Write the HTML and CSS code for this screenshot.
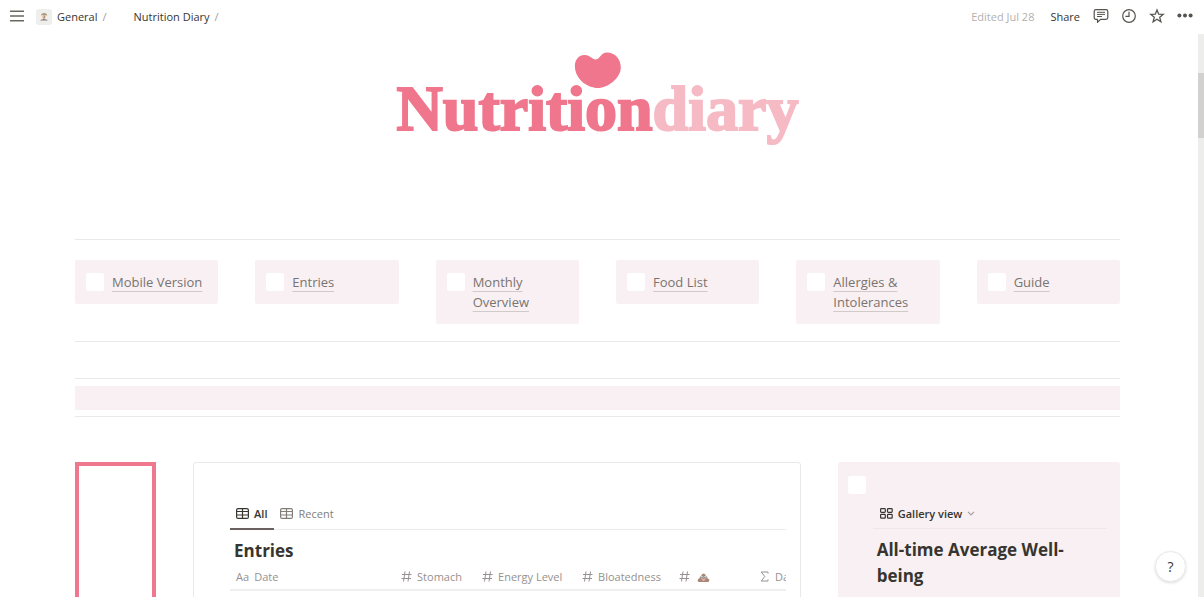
FILE: index.html
```html
<!DOCTYPE html>
<html lang="en">
<head>
<meta charset="utf-8">
<title>Nutrition Diary</title>
<link rel="stylesheet" href="styles.css">
</head>
<body>
<div class="app">
  <header class="topbar">
    <button class="icon-btn" aria-label="Menu">
      <svg width="14" height="14" viewBox="0 0 14 14" fill="none" stroke="#6b6862" stroke-width="1.5"><path d="M0 2.2h14M0 7h14M0 11.800h14"/></svg>
    </button>
    <nav class="crumbs" aria-label="Breadcrumb">
      <a class="crumb" href="#general">
        <span class="crumb-icon"><svg width="10" height="10" viewBox="0 0 10 10"><path d="M2 3.500Q2.200 1 5.200 1Q8 1 8.300 3.800L6.800 3 5.500 3.600 3.800 2.900Z" fill="#a99a82"/><path d="M3.400 3.300h3.200v2.500L5 7 3.400 5.800Z" fill="#e5bb96"/><path d="M5.700 3.500L4.800 7" stroke="#b5815c" stroke-width=".9"/><path d="M1 8.600Q2 7 5 7T9 8.600Z" fill="#867b70"/></svg></span>
        General</a>
      <span class="slash">/</span>
      <a class="crumb crumb-last" href="#diary">Nutrition Diary</a>
      <span class="slash">/</span>
    </nav>
    <div class="actions">
      <span class="edited">Edited Jul 28</span>
      <button class="share">Share</button>
      <button class="icon-btn" aria-label="Comments">
        <svg width="16" height="16" viewBox="0 0 16 16" fill="none" stroke="#55534e" stroke-width="1.2" stroke-linejoin="round"><path d="M3 1.600h10Q14.800 1.600 14.800 3.400v6.200Q14.800 11.400 13 11.400H7.600L4.500 14.300V11.400H3Q1.200 11.400 1.200 9.600V3.400Q1.200 1.600 3 1.600Z"/><path d="M4 4.300h8M4 6.400h8M4 8.500h5" stroke-width="1"/></svg>
      </button>
      <button class="icon-btn" aria-label="Updates">
        <svg width="16" height="16" viewBox="0 0 16 16" fill="none" stroke="#55534e" stroke-width="1.200"><circle cx="8" cy="8" r="6.300"/><path d="M8 3.800V8.300H4.400"/></svg>
      </button>
      <button class="icon-btn" aria-label="Favorite">
        <svg width="16" height="16" viewBox="0 0 16 16" fill="none" stroke="#55534e" stroke-width="1.300" stroke-linejoin="miter"><path d="M8 1.900L9.700 6.200 14.200 6.400 10.700 9.300 11.900 13.700 8 11.200 4.100 13.700 5.300 9.300 1.800 6.400 6.300 6.200Z"/></svg>
      </button>
      <button class="icon-btn" aria-label="More">
        <svg width="16" height="16" viewBox="0 0 16 16" fill="#55534e"><circle cx="2.400" cy="7.500" r="2"/><circle cx="8" cy="7.500" r="2"/><circle cx="13.600" cy="7.500" r="2"/></svg>
      </button>
    </div>
  </header>

  <div class="scroller">
    <main class="page">
      <div class="logo">
        <svg class="heart" width="48" height="38" viewBox="0 0 48 38"><path d="M1 16C0 8 5 2.500 11 3C17 3.500 19 8 22 7.500C26 7 27 .5 33 .5C41 .5 47 7 46.800 16C46.500 26 34 36 24 36C13 36 2 27 1 16Z" fill="#ef768c"/></svg>
        <h1 class="wordmark">Nutrition<span class="wordmark-light">diary</span></h1>
      </div>

      <nav class="links" aria-label="Sections">
        <div class="callout"><span class="blank"></span><a href="#mobile">Mobile Version</a></div>
        <div class="callout"><span class="blank"></span><a href="#entries">Entries</a></div>
        <div class="callout"><span class="blank"></span><a href="#monthly">Monthly Overview</a></div>
        <div class="callout"><span class="blank"></span><a href="#food">Food List</a></div>
        <div class="callout"><span class="blank"></span><a href="#allergies">Allergies &amp; Intolerances</a></div>
        <div class="callout"><span class="blank"></span><a href="#guide">Guide</a></div>
      </nav>

      <div class="band"><div class="band-fill"></div></div>

      <div class="columns">
        <div class="frame"></div>

        <section class="database" id="entries">
          <div class="tabs">
            <button class="tab tab-active"><svg width="13" height="11" viewBox="0 0 13 11" fill="none" stroke="currentColor" stroke-width="1.200"><rect x=".6" y=".6" width="11.800" height="9.800" rx="1.500"/><path d="M.6 3.500h11.800M.6 7h11.800M6.500 .6v9.800"/></svg>All</button>
            <button class="tab"><svg width="13" height="11" viewBox="0 0 13 11" fill="none" stroke="currentColor" stroke-width="1.200"><rect x=".6" y=".6" width="11.800" height="9.800" rx="1.500"/><path d="M.6 3.500h11.800M.6 7h11.800M6.500 .6v9.800"/></svg>Recent</button>
          </div>
          <h2 class="title">Entries</h2>
          <div class="table-clip">
            <table class="entries">
              <colgroup><col class="c-date"><col class="c-stomach"><col class="c-energy"><col class="c-bloat"><col class="c-stool"><col class="c-more"></colgroup>
              <thead><tr>
                <th><span class="head"><span class="aa">Aa</span>Date</span></th>
                <th><span class="head"><svg class="num" width="11" height="11" viewBox="0 0 11 11"><path d="M4 .5L2.500 10.500M8.500 .5L7 10.500M1 3.500h9.500M.5 7.500H10"/></svg>Stomach</span></th>
                <th><span class="head"><svg class="num" width="11" height="11" viewBox="0 0 11 11"><path d="M4 .5L2.500 10.500M8.500 .5L7 10.500M1 3.500h9.500M.5 7.500H10"/></svg>Energy Level</span></th>
                <th><span class="head"><svg class="num" width="11" height="11" viewBox="0 0 11 11"><path d="M4 .5L2.500 10.500M8.500 .5L7 10.500M1 3.500h9.500M.5 7.500H10"/></svg>Bloatedness</span></th>
                <th><span class="head"><svg class="num" width="11" height="11" viewBox="0 0 11 11"><path d="M4 .5L2.500 10.500M8.500 .5L7 10.500M1 3.500h9.500M.5 7.500H10"/></svg><svg class="poop" width="13" height="12" viewBox="0 0 13 12"><path d="M6.300 2.500Q9 3 8.700 5Q10.800 5.500 10.400 7.200Q12.700 8 12.300 10Q12 11 10.500 11H2.500Q.6 11 .6 9.500Q.7 7.800 2.600 7.300Q2.200 5.500 4.200 5Q3.900 3.800 6.300 2.500Z" fill="#ad8673"/><circle cx="5" cy="6.200" r="1.200" fill="#d5dde2"/><circle cx="8" cy="6.200" r="1.200" fill="#d5dde2"/><circle cx="5.100" cy="6.300" r=".6" fill="#52606a"/><circle cx="7.900" cy="6.300" r=".6" fill="#52606a"/><path d="M4.500 8.500Q6.500 10.300 8.500 8.500Z" fill="#eee"/></svg></span></th>
                <th><span class="head"><svg class="num sum" width="9" height="11" viewBox="0 0 9 11"><path d="M8 2.500V1H1.200L4.800 5.500 1.200 10H8V8.500"/></svg>Day</span></th>
              </tr></thead>
            </table>
          </div>
        </section>

        <section class="gallery">
          <span class="blank"></span>
          <div class="gallery-body">
            <div class="view-row">
              <button class="view-btn"><svg width="13" height="11" viewBox="0 0 13 11" fill="none" stroke="currentColor" stroke-width="1.200"><rect x=".6" y=".6" width="4.700" height="3.800" rx=".8"/><rect x="7.500" y=".6" width="4.700" height="3.800" rx=".8"/><rect x=".6" y="6.400" width="4.700" height="3.800" rx=".8"/><rect x="7.500" y="6.400" width="4.700" height="3.800" rx=".8"/></svg>Gallery view<svg width="8" height="5" viewBox="0 0 8 5" fill="none" stroke="#a5a09f" stroke-width="1.200"><path d="M1 .8L4 3.800 7 .8"/></svg></button>
            </div>
            <h2 class="title">All-time Average Well-being</h2>
          </div>
        </section>
      </div>
    </main>
    <div class="track" aria-hidden="true"><div class="thumb"></div></div>
  </div>
  <button class="help" aria-label="Help">?</button>
</div>
</body>
</html>
```
FILE: styles.css
```css
* { box-sizing: border-box; }

body {
  margin: 0;
  background: #fff;
  color: #37352f;
  font-family: "Open Sans", "Noto Sans", sans-serif;
  font-size: 11px;
}

button {
  border: 0;
  padding: 0;
  background: none;
  color: inherit;
  font: inherit;
  cursor: pointer;
}

a { color: inherit; text-decoration: none; }
svg { display: block; flex: none; }

.app {
  position: relative;
  display: flex;
  flex-direction: column;
  height: 100vh;
  overflow: hidden;
}

/* Top bar */
.topbar {
  display: flex;
  align-items: center;
  height: 34px;
  padding: 0 11px 2px 10px;
}
.crumbs {
  display: flex;
  align-items: center;
  margin-left: 12px;
  padding-top: 1px;
}
.crumb { display: flex; align-items: center; gap: 5px; }
.crumb-icon {
  display: grid;
  place-items: center;
  width: 16px;
  height: 16px;
  border-radius: 3px;
  background: #eeeeed;
}
.crumb-last { margin-left: 27px; }
.slash { margin-left: 5px; color: #a3a19d; }
.actions {
  display: flex;
  align-items: center;
  margin-left: auto;
  gap: 12px;
}
.edited { color: #b3b1ae; }
.share { margin: 0 1px 0 4px; }

/* Scrolling page */
.scroller { display: flex; flex: 1; min-height: 0; }
.page {
  flex: 1;
  min-width: 0;
  padding: 0 78px 0 75px;
  overflow: hidden;
}
.track { width: 6px; padding-top: 39px; background: #ededec; }
.thumb { height: 65px; background: #d3d1cf; }

.logo {
  display: flex;
  flex-direction: column;
  align-items: center;
  height: 205px;
  padding-top: 18px;
}
.wordmark {
  margin: -13px 0 0;
  color: #ef768c;
  font: bold 64px/64px "Liberation Serif", serif;
  -webkit-text-stroke: 2px currentColor;
}
.wordmark-light { color: #f6bac5; }

.links {
  display: grid;
  grid-template-columns: repeat(6, 1fr);
  align-items: start;
  gap: 37px;
  height: 103px;
  padding-top: 20px;
  border-top: 1px solid #e9e9e8;
  border-bottom: 1px solid #e9e9e8;
}
.callout {
  display: flex;
  align-items: flex-start;
  gap: 8px;
  padding: 12px 11px;
  border-radius: 2px;
  background: #f9f0f3;
  color: #787470;
  font-size: 13px;
  font-weight: 500;
  line-height: 20px;
}
.callout a {
  text-decoration: underline 1px #d0cac9;
  text-underline-offset: 4px;
}
.callout .blank { margin-top: 1px; }
.blank {
  flex: none;
  width: 18px;
  height: 18px;
  border-radius: 2px;
  background: #fff;
}

.band {
  margin-top: 36px;
  padding: 7px 0 6px;
  border-top: 1px solid #e9e9e8;
  border-bottom: 1px solid #e9e9e8;
}
.band-fill { height: 24px; background: #f9f0f3; }

.columns {
  display: grid;
  grid-template-columns: 81fr 607fr 282fr;
  column-gap: 37px;
  height: 300px;
  margin-top: 45px;
}
.frame { border: 4px solid #ef788e; }

.database {
  min-width: 0;
  padding: 36px 14px 0 36px;
  border: 1px solid #e9e9e8;
  border-radius: 3px;
}
.tabs {
  display: flex;
  height: 31px;
  border-bottom: 1px solid #ececeb;
}
.tab {
  display: flex;
  align-items: center;
  gap: 5px;
  height: 31px;
  padding: 0 7px 0 6px;
  border-bottom: 2px solid transparent;
  color: #817e7a;
  font-weight: 500;
}
.tab-active { border-color: #69615f; color: #37352f; font-weight: 600; }
.title {
  margin: 0;
  font-size: 17px;
  font-weight: 700;
  line-height: 26px;
}
.database .title { padding: 8px 4px 0; }
.table-clip { overflow: hidden; }
.entries {
  width: 606px;
  border-collapse: collapse;
  table-layout: fixed;
}
.c-date { width: 165px; }
.c-stomach { width: 81px; }
.c-energy { width: 100px; }
.c-bloat { width: 97px; }
.c-stool { width: 81px; }
.c-more { width: 82px; }
.entries th {
  height: 26px;
  padding: 0 6px;
  border-bottom: 2px solid #efefee;
  color: #96918f;
  font-weight: 400;
  text-align: left;
  white-space: nowrap;
}
.head { display: flex; align-items: center; gap: 5px; }
.num { fill: none; stroke: #96918f; stroke-width: 1; }
.poop { margin-left: 2px; }
.sum { margin-right: 1px; }

.gallery {
  min-width: 0;
  padding: 14px 13px 0 10px;
  border-radius: 2px;
  background: #f9f0f3;
}
.gallery .blank { display: block; }
.gallery-body { padding-left: 25px; }
.view-row {
  display: flex;
  height: 35px;
  padding: 5px 7px 0;
  border-bottom: 1px solid #ece7e9;
}
.view-btn {
  display: flex;
  align-items: center;
  gap: 5px;
  height: 28px;
  font-weight: 600;
}
.gallery .title { padding: 8px 4px 0; }

.help {
  position: absolute;
  right: 18px;
  bottom: 15px;
  width: 31px;
  height: 31px;
  border: 1px solid #ebebea;
  border-radius: 50%;
  background: #fff;
  box-shadow: 0 1px 3px rgba(15, 15, 15, .14);
  font-size: 14px;
}
```
